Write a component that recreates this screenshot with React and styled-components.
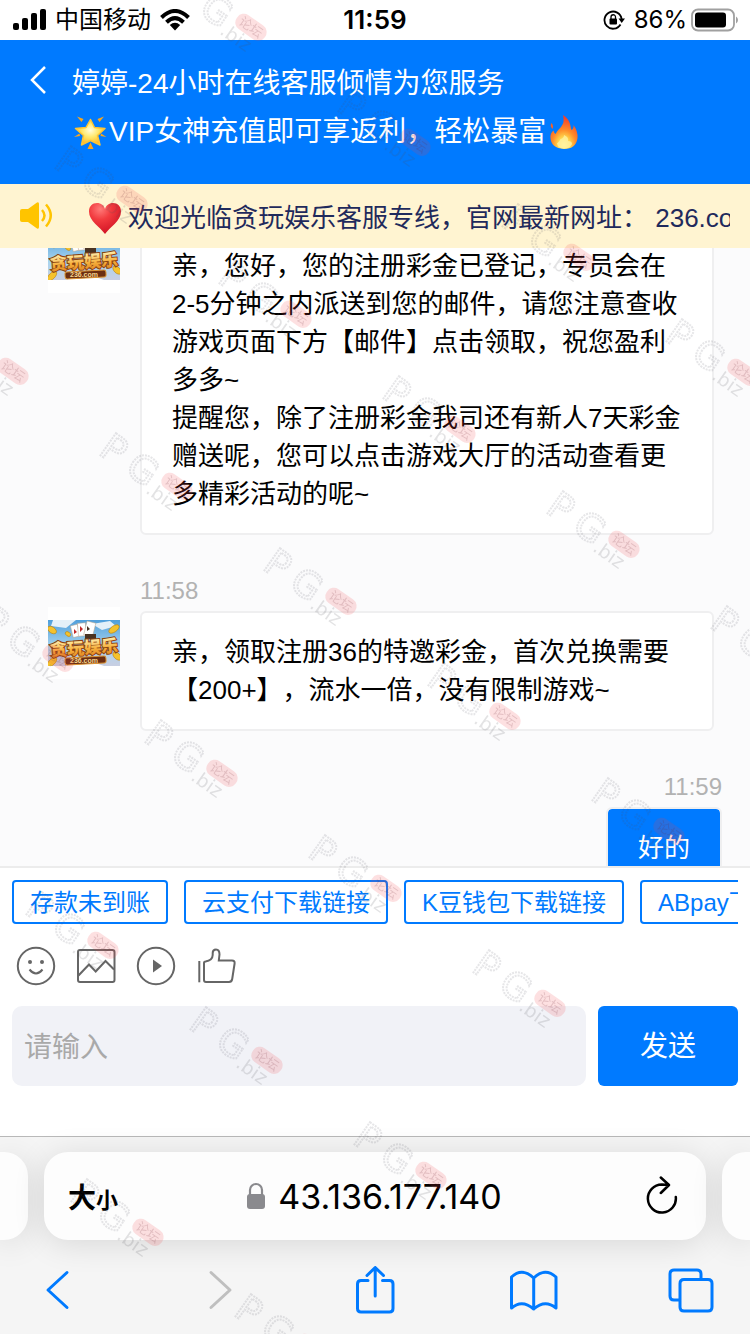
import React, { useLayoutEffect, useRef } from 'react'
import styled, { createGlobalStyle } from 'styled-components'

const blue = '#007aff'
const textFont = `'Liberation Sans', 'Noto Sans CJK SC', sans-serif`
const systemFont = `Inter, 'Noto Sans CJK SC', sans-serif`

export default () => (
  <Phone>
    <GlobalStyle />
    <StatusBar />
    <Header />
    <Notice />
    <Chat />
    <Composer />
    <Browser />
    <Watermarks />
  </Phone>
)

const StatusBar = () => (
  <Status>
    <StatusGroup>
      <svg width="34" height="22" viewBox="0 0 34 22">
        <rect x="1" y="14" width="6" height="7" rx="2" />
        <rect x="10" y="9" width="6" height="12" rx="2" />
        <rect x="19" y="4" width="6" height="17" rx="2" />
        <rect x="28" y="0" width="6" height="21" rx="2" />
      </svg>
      <span>中国移动</span>
      <svg width="30" height="22" viewBox="0 0 30 22">
        <path
          d="M1.500 8.500Q15-4.500 28.500 8.500M6.500 13.200Q15 5 23.500 13.200"
          fill="none"
          stroke="#000"
          strokeWidth="4"
        />
        <path d="M9.800 16Q15 11.500 20.200 16L15 21.500Z" />
      </svg>
    </StatusGroup>
    <Time>11:59</Time>
    <StatusGroup $end>
      <svg width="22" height="22" viewBox="0 0 22 22">
        <path
          d="M17.500 15.500A8.600 8.600 0 1 1 18.600 10"
          fill="none"
          stroke="#000"
          strokeWidth="1.800"
        />
        <path d="M15.500 9.500H22L18.700 14Z" />
        <rect x="6.500" y="9.500" width="7.500" height="6" rx="1" />
        <path
          d="M8 10V8a2.200 2.200 0 0 1 4.500 0V10"
          fill="none"
          stroke="#000"
          strokeWidth="1.300"
        />
      </svg>
      <Percent>86%</Percent>
      <svg width="48" height="24" viewBox="0 0 48 24">
        <rect
          x="2"
          y="1.500"
          width="42"
          height="21"
          rx="6"
          fill="none"
          stroke="#a0a0a0"
          strokeWidth="1.800"
        />
        <rect x="5" y="4.500" width="31" height="15" rx="3" />
        <path d="M46 8.500Q48 9.500 48 12T46 15.500Z" fill="#a0a0a0" />
      </svg>
    </StatusGroup>
  </Status>
)

const Header = () => (
  <HeaderBar>
    <BackButton aria-label="返回">
      <svg width="20" height="30" viewBox="0 0 20 30">
        <path
          d="M17 2L4 15L17 28"
          fill="none"
          stroke="#fff"
          strokeWidth="2.500"
        />
      </svg>
    </BackButton>
    <Title>
      <div>婷婷-24小时在线客服倾情为您服务</div>
      <TitleLine>
        <Star />
        <span>VIP女神充值即可享返利，轻松暴富</span>
        <Flame />
      </TitleLine>
    </Title>
  </HeaderBar>
)

const Star = () => (
  <svg width="36" height="36" viewBox="0 0 36 36">
    <defs>
      <radialGradient id="star" cx="50%" cy="42%" r="55%">
        <stop offset="0" stopColor="#fffde0" />
        <stop offset="0.500" stopColor="#ffe86a" />
        <stop offset="1" stopColor="#fdb92a" />
      </radialGradient>
    </defs>
    <path
      d="M18.500 5.500L22.500 13.500L33 14.500L25.500 21.500L28 31L18.500 26.500L9.500 31L11.500 21.500L3.500 14.500L14 13.500Z"
      fill="url(#star)"
      stroke="#fdc535"
      strokeWidth="1.500"
      strokeLinejoin="round"
    />
    <path
      d="M5 2.500L11.500 5L9.500 8ZM32 2.500L25.500 5L27.500 8ZM18.500 28.500L21.500 35H15.500ZM2 23L7.500 19.500L8 22ZM34.500 23L29 19.500L28.500 22Z"
      fill="#f9a61d"
    />
  </svg>
)

const Flame = () => (
  <svg width="36" height="36" viewBox="0 0 36 36">
    <defs>
      <radialGradient id="flame" cx="50%" cy="88%" r="80%">
        <stop offset="0" stopColor="#fff7a0" />
        <stop offset="0.300" stopColor="#ffd04a" />
        <stop offset="0.550" stopColor="#ff8d2a" />
        <stop offset="1" stopColor="#f4402a" />
      </radialGradient>
    </defs>
    <path
      d="M16 1C24 6 23 12 24.500 16Q27 14.500 26.500 11Q31 17 30.500 24Q29 35 17 35Q4 34 3.500 24Q3 19 6.500 16.500Q7 19 8.500 20Q10 17 14 13Q18 8 16 1Z"
      fill="url(#flame)"
    />
    <path
      d="M17 21Q22 23 21 27Q25 27 25 30Q23 34.500 17 34.500Q11 34.500 10 29.500Q13 27 13.500 25Q17 24 17 21Z"
      fill="#fff3a0"
      opacity="0.800"
    />
    <path d="M4.500 9Q7 12 5.500 15Q2.500 12 4.500 9Z" fill="#f4602a" />
  </svg>
)

const Notice = () => (
  <NoticeBar>
    <svg width="36" height="30" viewBox="0 0 36 30">
      <path
        d="M2 8H8L17 1.500Q19 0.500 19 3V26Q19 28.500 17 27.500L8 21H2Q0 21 0 19V10Q0 8 2 8Z"
        fill="#ffc400"
      />
      <path
        d="M22 9Q27 14.500 22 20M26 3.500Q35.500 14.500 26 25.500"
        fill="none"
        stroke="#ffc400"
        strokeWidth="2.500"
      />
    </svg>
    <NoticeText>
      <svg width="34" height="34" viewBox="0 0 34 34">
        <defs>
          <radialGradient id="heart" cx="35%" cy="20%" r="85%">
            <stop offset="0" stopColor="#ff7a78" />
            <stop offset="0.400" stopColor="#f23b3f" />
            <stop offset="1" stopColor="#cf1022" />
          </radialGradient>
        </defs>
        <path
          d="M17 33C12 26 1 20 1 10.500C1 5 4.500 2 9 2C13 2 16 4.500 17 8C18 4.500 21 2 25 2C29.500 2 33 5 33 10.500C33 20 22 26 17 33Z"
          fill="url(#heart)"
        />
      </svg>
      <span>欢迎光临贪玩娱乐客服专线，官网最新网址： 236.com</span>
    </NoticeText>
  </NoticeBar>
)

const Chat = () => {
  const list = useRef(null)

  useLayoutEffect(() => {
    list.current.scrollTop = 63
  }, [])

  return (
    <ChatList ref={list}>
      {messages.map((m, i) => (
        <Message key={i} $mine={m.mine}>
          {!m.mine && <Avatar />}
          <MessageBody $mine={m.mine}>
            <Stamp>{m.time}</Stamp>
            <Bubble $mine={m.mine}>
              {m.lines.map(line => (
                <p key={line}>{line}</p>
              ))}
            </Bubble>
          </MessageBody>
        </Message>
      ))}
    </ChatList>
  )
}

const Avatar = () => (
  <AvatarBox>
    <svg width="72" height="46" viewBox="0 0 72 46">
      <defs>
        <linearGradient id="sky" x1="0" y1="0" x2="0" y2="1">
          <stop offset="0" stopColor="#4f9fdb" />
          <stop offset="0.600" stopColor="#a8d4ef" />
          <stop offset="1" stopColor="#c9cfe2" />
        </linearGradient>
        <linearGradient id="gold" x1="0" y1="0" x2="0" y2="1">
          <stop offset="0.200" stopColor="#fff0b0" />
          <stop offset="0.600" stopColor="#f6b03c" />
          <stop offset="1" stopColor="#d9791c" />
        </linearGradient>
      </defs>
      <rect width="72" height="46" fill="url(#sky)" />
      <path d="M5 0L28 0L18 8L3 6ZM44 4L62 1L68 6L54 10Z" fill="#e4f0f8" />
      <path d="M18 46Q36 38 56 46Z" fill="#fff" />
      <g fill="#fff" stroke="#b9a58c" strokeWidth="0.500">
        <rect x="24" y="5" width="7" height="12" transform="rotate(-14 27 12)" />
        <rect x="30" y="3" width="8" height="13" transform="rotate(-5 34 10)" />
        <rect x="37" y="2" width="9" height="14" transform="rotate(14 42 10)" />
      </g>
      <path d="M26 9L29 12L26 14ZM32 6L35 9L32 12Z" fill="#c22a2a" />
      <path d="M39 6L42 9L39 11ZM37 14H48V19H37Z" fill="#4a3322" />
      <g fill="#f5c22c" stroke="#b98210" strokeWidth="0.600">
        <ellipse cx="4" cy="10" rx="5" ry="3" transform="rotate(35 4 10)" />
        <ellipse cx="66" cy="9" rx="6" ry="3" transform="rotate(-35 66 9)" />
        <ellipse cx="20" cy="14" rx="3" ry="2" transform="rotate(35 20 14)" />
        <ellipse cx="4" cy="42" rx="6" ry="3" transform="rotate(-45 4 42)" />
        <ellipse cx="69" cy="36" rx="5" ry="3" transform="rotate(45 69 36)" />
      </g>
      <AvatarName x="36" y="34" transform="rotate(-4 36 28)">
        贪玩娱乐
      </AvatarName>
      <rect
        x="17"
        y="37"
        width="41"
        height="7"
        rx="2"
        fill="#6b2e12"
        stroke="#dc9433"
        transform="rotate(-3 37 40)"
      />
      <AvatarSite x="36" y="43">
        236.com
      </AvatarSite>
    </svg>
  </AvatarBox>
)

const Composer = () => (
  <ComposerPanel>
    <QuickLinks>
      {quickReplies.map(q => (
        <QuickButton key={q}>{q}</QuickButton>
      ))}
    </QuickLinks>
    <Tools>
      <ToolButton aria-label="表情">
        <svg viewBox="0 0 40 40">
          <circle cx="20" cy="20" r="18.200" />
          <path d="M13.500 23.500Q20 31.500 26.500 23.500" />
          <circle className="solid" cx="14" cy="16" r="2" />
          <circle className="solid" cx="26" cy="16" r="2" />
        </svg>
      </ToolButton>
      <ToolButton aria-label="图片">
        <svg viewBox="0 0 40 40">
          <rect x="2" y="4" width="36.500" height="32" rx="2" />
          <path d="M2.500 29.500L13 18.500L19.700 25.500L29.500 15L38 23.500" />
        </svg>
      </ToolButton>
      <ToolButton aria-label="视频">
        <svg viewBox="0 0 40 40">
          <circle cx="20" cy="20" r="18.200" />
          <path className="solid" d="M17 13.500L26 20L17 26.500Z" />
        </svg>
      </ToolButton>
      <ToolButton aria-label="评价">
        <svg viewBox="0 0 40 40">
          <path d="M3.300 15V36.300" />
          <path d="M8 17Q8 15.500 9.500 15.500Q16.500 14.500 16.700 9V7Q16.700 3.500 20 3.500Q23.500 3.500 23.500 8.500L22.800 14.500H36Q39 14.500 38.600 17.500L36.200 33Q35.700 36 33 36H10Q8 36 8 34Z" />
        </svg>
      </ToolButton>
    </Tools>
    <InputRow>
      <MessageInput placeholder="请输入" aria-label="请输入" />
      <SendButton>发送</SendButton>
    </InputRow>
  </ComposerPanel>
)

const Browser = () => (
  <BrowserPanel>
    <Tabs>
      <SideTab />
      <AddressBar>
        <TextSize>
          大<small>小</small>
        </TextSize>
        <Address>
          <svg width="20" height="28" viewBox="0 0 20 28">
            <rect x="1" y="12" width="18" height="15" rx="3" fill="#8a8a8e" />
            <path
              d="M4 13V8a6 6 0 0 1 12 0V13"
              fill="none"
              stroke="#8a8a8e"
              strokeWidth="2.200"
            />
          </svg>
          <span>43.136.177.140</span>
        </Address>
        <ReloadButton aria-label="重新载入">
          <svg width="36" height="40" viewBox="0 0 36 40">
            <path
              d="M31.800 21A14 14 0 1 1 17.800 8.500L25 9M16.800 1.500L25 9L16.800 17"
              fill="none"
              stroke="#000"
              strokeWidth="2.500"
              strokeLinecap="round"
              strokeLinejoin="round"
            />
          </svg>
        </ReloadButton>
      </AddressBar>
      <SideTab $right />
    </Tabs>
    <Toolbar>
      {toolbar.map(t => (
        <ToolbarButton key={t.label} aria-label={t.label} disabled={t.disabled}>
          <svg viewBox="0 0 48 48">
            <path d={t.path} />
          </svg>
        </ToolbarButton>
      ))}
    </Toolbar>
  </BrowserPanel>
)

const Watermarks = () => (
  <WatermarkLayer aria-hidden="true">
    <defs>
      <g id="mark">
        <text className="outline" x="-3" y="0">
          P
        </text>
        <text className="outline" x="29" y="0">
          G
        </text>
        <rect className="pill" x="64" y="-27" width="34" height="17" rx="8" />
        <text className="forum" x="81" y="-14">
          论坛
        </text>
        <text className="domain" x="58" y="5">
          .biz
        </text>
      </g>
    </defs>
    {marks.map(([x, y]) => (
      <use
        key={`${x},${y}`}
        href="#mark"
        transform={`translate(${x} ${y}) rotate(35)`}
      />
    ))}
  </WatermarkLayer>
)

const GlobalStyle = createGlobalStyle`
  body {
    margin: 0;
    background: #fff;
    font-family: ${textFont};
  }
  * {
    box-sizing: border-box;
  }
  button, input {
    font-family: inherit;
    margin: 0;
  }
  button {
    padding: 0;
    border: 0;
    background: none;
    color: #000;
    cursor: pointer;
  }
  svg {
    display: block;
    flex-shrink: 0;
  }
`

const Phone = styled.div`
  position: relative;
  display: flex;
  flex-direction: column;
  height: 100vh;
  overflow: hidden;
`

const Status = styled.div`
  display: grid;
  grid-template-columns: 1fr auto 1fr;
  align-items: center;
  flex-shrink: 0;
  height: 40px;
  padding: 0 12px;
  font-family: ${systemFont};
  font-size: 24px;
  line-height: 40px;
`

const StatusGroup = styled.div`
  display: flex;
  align-items: center;
  justify-content: ${p => (p.$end ? 'flex-end' : 'flex-start')};
  gap: 9px;
`

const Percent = styled.span`
  margin-right: -6px;
`

const Time = styled.div`
  font-size: 26px;
  font-weight: 600;
`

const HeaderBar = styled.header`
  display: flex;
  flex-shrink: 0;
  padding: 20px 28px 28px;
  background: ${blue};
  color: #fff;
`

const BackButton = styled.button`
  display: flex;
  align-items: center;
  width: 44px;
  height: 40px;
`

const Title = styled.div`
  font-size: 28px;
  line-height: 48px;
  white-space: nowrap;
`

const TitleLine = styled.div`
  display: flex;
  align-items: center;
  gap: 1px;
`

const NoticeBar = styled.div`
  display: flex;
  align-items: center;
  flex-shrink: 0;
  gap: 32px;
  height: 64px;
  padding: 0 20px;
  background: #fff4d1;
`

const NoticeText = styled.div`
  display: flex;
  align-items: center;
  gap: 6px;
  flex: 1;
  min-width: 0;
  padding-top: 4px;
  overflow: hidden;
  color: #1f2a5c;
  font-size: 26px;
  line-height: 40px;
  white-space: nowrap;
`

const ChatList = styled.main`
  flex: 1;
  min-height: 0;
  overflow-y: auto;
  scrollbar-width: none;
  background: #fbfbfc;
`

const Message = styled.div`
  display: flex;
  gap: 20px;
  justify-content: ${p => (p.$mine ? 'flex-end' : 'flex-start')};
  padding: 0 ${p => (p.$mine ? '28px' : '36px')} 36px 48px;
`

const MessageBody = styled.div`
  display: flex;
  flex-direction: column;
  align-items: ${p => (p.$mine ? 'flex-end' : 'stretch')};
  flex: ${p => (p.$mine ? 'none' : '1')};
  min-width: 0;
`

const Stamp = styled.div`
  color: #b2b2b2;
  font-size: 24px;
  line-height: 40px;
`

const Bubble = styled.div`
  padding: 20px 30px;
  border: 2px solid #efeff0;
  border-radius: 6px;
  background: ${p => (p.$mine ? blue : '#fff')};
  background-clip: padding-box;
  color: ${p => (p.$mine ? '#fff' : '#000')};
  font-size: 26px;
  line-height: 38px;
  text-spacing-trim: space-all;
  p {
    margin: 0;
  }
`

const AvatarBox = styled.div`
  display: flex;
  align-items: center;
  flex-shrink: 0;
  width: 72px;
  height: 72px;
  margin-top: 36px;
  background: #fff;
`

const AvatarName = styled.text`
  font-family: 'Noto Sans CJK SC', sans-serif;
  font-size: 17px;
  font-weight: 900;
  text-anchor: middle;
  fill: url(#gold);
  stroke: #8a4312;
  stroke-width: 2px;
  paint-order: stroke;
`

const AvatarSite = styled.text`
  font-size: 7px;
  font-weight: bold;
  text-anchor: middle;
  fill: #f7d58c;
`

const ComposerPanel = styled.section`
  flex-shrink: 0;
  padding: 12px 12px 50px;
  border-top: 2px solid #ececec;
  background: #fff;
`

const QuickLinks = styled.div`
  display: flex;
  gap: 16px;
  overflow: hidden;
`

const QuickButton = styled.button`
  flex-shrink: 0;
  height: 44px;
  padding: 0 16px 4px;
  border: 2px solid ${blue};
  border-radius: 4px;
  color: ${blue};
  font-size: 24px;
  white-space: nowrap;
`

const Tools = styled.div`
  display: flex;
  gap: 20px;
  padding: 22px 4px 20px;
`

const ToolButton = styled.button`
  width: 40px;
  height: 40px;
  svg {
    fill: none;
    stroke: #666;
    stroke-width: 2;
  }
  .solid {
    fill: #666;
    stroke: none;
  }
`

const InputRow = styled.div`
  display: flex;
  gap: 12px;
`

const MessageInput = styled.input`
  flex: 1;
  min-width: 0;
  height: 80px;
  padding: 4px 12px 0;
  border: 0;
  border-radius: 10px;
  outline: none;
  background: #f1f2f7;
  font-size: 28px;
  &::placeholder {
    color: #a9a9a9;
  }
`

const SendButton = styled.button`
  width: 140px;
  height: 80px;
  padding-bottom: 4px;
  border-radius: 6px;
  background: ${blue};
  color: #fff;
  font-size: 28px;
`

const BrowserPanel = styled.footer`
  flex-shrink: 0;
  border-top: 1px solid #b9b9b9;
  background: #f5f5f5;
  font-family: ${systemFont};
`

const Tabs = styled.div`
  display: flex;
  gap: 16px;
  padding-top: 15px;
`

const SideTab = styled.div`
  width: 28px;
  border-radius: ${p => (p.$right ? '24px 0 0 24px' : '0 24px 24px 0')};
  background: #fdfdfd;
  box-shadow: 0 4px 32px rgba(0, 0, 0, 0.12);
`

const AddressBar = styled.div`
  display: grid;
  grid-template-columns: 1fr auto 1fr;
  align-items: center;
  flex: 1;
  height: 88px;
  padding: 0 26px 0 24px;
  border-radius: 24px;
  background: #fdfdfd;
  box-shadow: 0 4px 32px rgba(0, 0, 0, 0.12);
`

const TextSize = styled.button`
  justify-self: start;
  font-size: 28px;
  font-weight: 700;
  small {
    font-size: 22px;
  }
`

const Address = styled.div`
  display: flex;
  align-items: center;
  gap: 12px;
  font-size: 34px;
`

const ReloadButton = styled.button`
  justify-self: end;
`

const Toolbar = styled.nav`
  display: flex;
  justify-content: space-between;
  padding: 26px 34px 20px;
`

const ToolbarButton = styled.button`
  width: 48px;
  height: 48px;
  svg {
    overflow: visible;
    fill: none;
    stroke: ${p => (p.disabled ? '#bfbfbf' : blue)};
    stroke-width: 3;
    stroke-linecap: round;
    stroke-linejoin: round;
  }
`

const WatermarkLayer = styled.svg`
  position: absolute;
  inset: 0;
  width: 100%;
  height: 100%;
  pointer-events: none;
  .outline {
    fill: none;
    stroke: rgba(80, 80, 90, 0.14);
    stroke-width: 2;
    stroke-dasharray: 2 1;
    font-family: 'DejaVu Sans', sans-serif;
    font-size: 37px;
  }
  .pill {
    fill: rgba(240, 60, 70, 0.16);
  }
  .forum {
    fill: rgba(110, 40, 50, 0.18);
    font-family: 'Noto Sans CJK SC', sans-serif;
    font-size: 13px;
    text-anchor: middle;
  }
  .domain {
    fill: rgba(80, 80, 90, 0.16);
    font-family: 'DejaVu Sans', sans-serif;
    font-size: 19px;
  }
`

const messages = [
  {
    time: '11:58',
    lines: [
      '亲，您好，您的注册彩金已登记，专员会在2-5分钟之内派送到您的邮件，请您注意查收游戏页面下方【邮件】点击领取，祝您盈利多多~',
      '提醒您，除了注册彩金我司还有新人7天彩金赠送呢，您可以点击游戏大厅的活动查看更多精彩活动的呢~',
    ],
  },
  {
    time: '11:58',
    lines: [
      '亲，领取注册36的特邀彩金，首次兑换需要【200+】，流水一倍，没有限制游戏~',
    ],
  },
  {
    time: '11:59',
    mine: true,
    lines: ['好的'],
  },
]

const quickReplies = [
  '存款未到账',
  '云支付下载链接',
  'K豆钱包下载链接',
  'ABpay下载链接',
]

const toolbar = [
  { label: '后退', path: 'M33 6.500L14 24L33 41.500' },
  { label: '前进', path: 'M18 6.500L37 24L18 41.500', disabled: true },
  {
    label: '共享',
    path:
      'M17 14.500H10Q6.500 14.500 6.500 18V42.500Q6.500 46 10 46H38.500Q42 46 42 42.500V18Q42 14.500 38.500 14.500H31.500M24.200 30V1.500M16 9.500L24.200 1.500L32.500 9.500',
  },
  {
    label: '书签',
    path:
      'M23.700 12Q12 1 1.500 11V42Q12 33 23.700 43Q35 33 46 42V11Q35 1 23.700 12ZM23.700 12V43',
  },
  {
    label: '标签页',
    path:
      'M12 34H6Q2 34 2 30V8Q2 4 6 4H29Q33 4 33 8V13M16 13.500H40Q44 13.500 44 17.500V41Q44 45 40 45H16Q12 45 12 41V17.500Q12 13.500 16 13.500Z',
  },
]

// left end of each mark's baseline
const marks = [
  [174, -4],
  [338, 111],
  [502, 226],
  [666, 341],
  [55, 168],
  [219, 283],
  [383, 398],
  [547, 513],
  [711, 628],
  [-64, 340],
  [100, 455],
  [264, 570],
  [428, 685],
  [592, 800],
  [-19, 627],
  [145, 742],
  [309, 857],
  [473, 972],
  [26, 914],
  [190, 1029],
  [354, 1144],
  [71, 1201],
  [235, 1316],
]
